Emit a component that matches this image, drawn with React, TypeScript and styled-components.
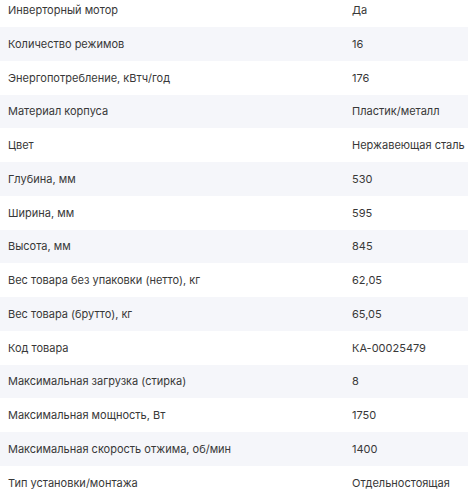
import React from 'react'
import styled, { createGlobalStyle } from 'styled-components'

const GlobalStyle = createGlobalStyle`
  html, body {
    margin: 0;
    padding: 0;
    background: #fff;
  }
  body {
    font-family: Inter, "Noto Sans", sans-serif;
    overflow: hidden;
  }
`

const SpecTable = styled.section`
  margin-top: -6.75px;
  width: 468px;
`

const SpecRow = styled.div<{ $striped: boolean }>`
  display: grid;
  grid-template-columns: 344px 1fr;
  height: 33.75px;
  align-items: center;
  background: ${p => (p.$striped ? '#f5f6fa' : '#fff')};
`

const Cell = styled.div`
  padding-left: 8px;
  font-family: Inter, sans-serif;
  font-size: 11px;
  color: #383838;
  white-space: nowrap;
`

const specs: [string, string][] = [
  ['Инверторный мотор', 'Да'],
  ['Количество режимов', '16'],
  ['Энергопотребление, кВтч/год', '176'],
  ['Материал корпуса', 'Пластик/металл'],
  ['Цвет', 'Нержавеющая сталь'],
  ['Глубина, мм', '530'],
  ['Ширина, мм', '595'],
  ['Высота, мм', '845'],
  ['Вес товара без упаковки (нетто), кг', '62,05'],
  ['Вес товара (брутто), кг', '65,05'],
  ['Код товара', 'КА-00025479'],
  ['Максимальная загрузка (стирка)', '8'],
  ['Максимальная мощность, Вт', '1750'],
  ['Максимальная скорость отжима, об/мин', '1400'],
  ['Тип установки/монтажа', 'Отдельностоящая'],
]

export default function App() {
  return (
    <>
      <GlobalStyle />
      <SpecTable>
        {specs.map(([name, value], i) => (
          <SpecRow key={name} $striped={i % 2 === 1}>
            <Cell>{name}</Cell>
            <Cell>{value}</Cell>
          </SpecRow>
        ))}
      </SpecTable>
    </>
  )
}
